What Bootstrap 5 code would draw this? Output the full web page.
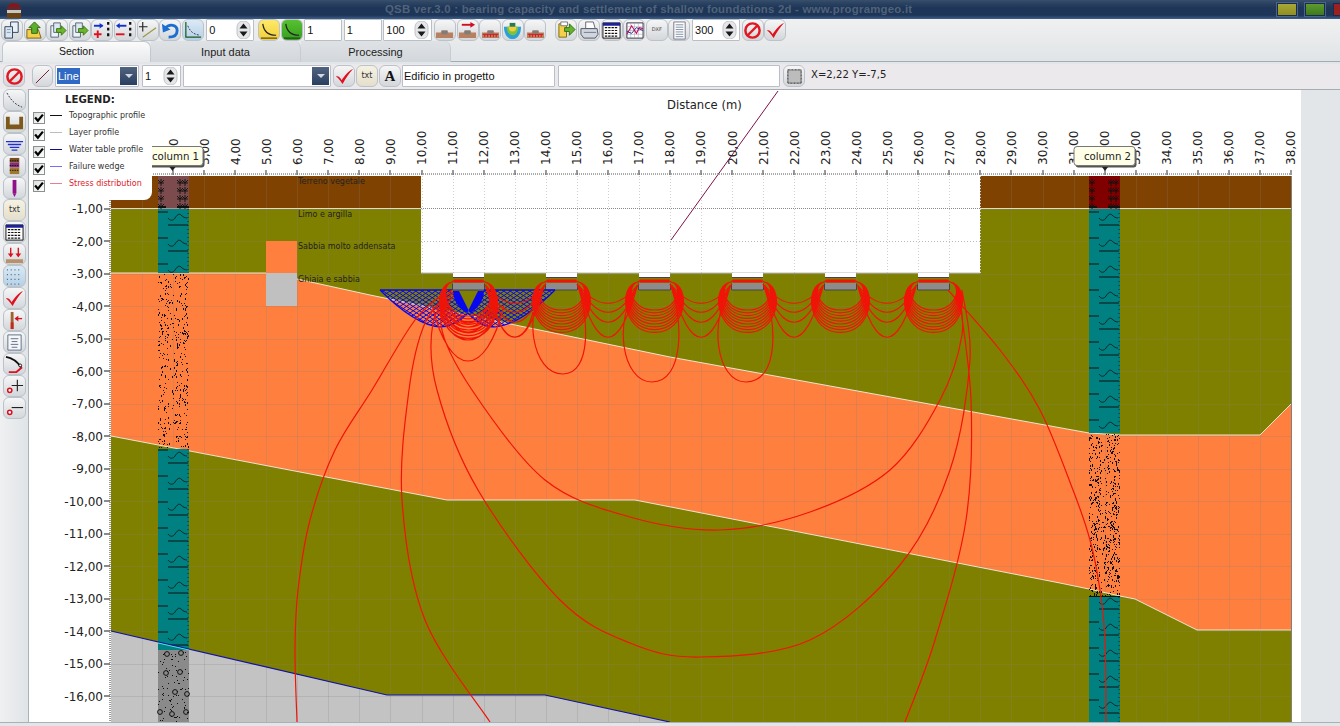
<!DOCTYPE html>
<html lang="en">
<head>
<meta charset="utf-8">
<title>QSB ver.3.0</title>
<link href="https://cdn.jsdelivr.net/npm/bootstrap@5.3.0/dist/css/bootstrap.min.css" rel="stylesheet">
<style>
html,body{margin:0;height:726px;overflow:hidden;background:#e3e6e9}
body{font-family:"Liberation Sans",Arial,sans-serif;font-size:10.8px;color:#222}
.app-shell{width:1340px;height:726px}
.title-strip{height:20px;background:linear-gradient(#3b4f69 0,#2f4766 10%,#1f3658 40%,#1d3557 80%,#3f5f8a 100%);color:#4f6379;font-weight:700;font-size:11.4px;letter-spacing:.02em;position:relative}
.title-logo{position:absolute;left:5px;top:1px;width:18px;height:18px}
.win-ctrl{width:20px;height:13px;border:1px solid #1b2c4a;outline:1px solid #4a648a;display:block}
.win-min{background:linear-gradient(#a8a838,#8f8f20)}
.win-max{background:linear-gradient(#5f9a30,#3d7a1c)}
.win-close{background:#9b2020;width:7px;border-right:0;outline:0}
.win-row{position:absolute;left:1277px;top:3px;gap:8px}
.tool-zone{background:linear-gradient(#f0f0f0,#e0e4e7)}
.tool-strip{height:22px;padding-left:1px;gap:.6px}
.tool-btn{width:22px;height:22px;flex:0 0 22px;border:1px solid #bcc2c9;border-radius:6px;background:linear-gradient(#f6f6f6,#d3d7db);padding:0;display:flex;align-items:center;justify-content:center}
.tool-btn svg{width:19px;height:19px;display:block}
.tool-btn.is-on{background:linear-gradient(#dbe9f5,#b6d0e6)}
.tool-btn.is-yellow{background:linear-gradient(#ffe96a,#f2cf3a)}
.tool-btn.is-green{background:linear-gradient(#58c030,#35a020)}
.sep-gap{flex:0 0 8px}
.field{height:22px;background:#fff;border:1px solid #b9bfc6;border-radius:1px;display:flex;align-items:center;padding:0 2px;font-size:11px;color:#111;white-space:nowrap;overflow:hidden}
.spin-ico{width:15px;height:18px;margin-left:auto;flex:none}
.tabs-row{height:21px;border-bottom:1px solid #a3aab8;padding-left:2px;flex-wrap:nowrap}
.tabs-row .nav-link{width:150px;height:21px;padding:3px 0 0;text-align:center;font-size:11px;color:#222;background:linear-gradient(#dfe2e5,#d2d7db);border:0;border-right:1px solid #c6ccd2;border-radius:0 7px 0 0;margin:0}
.tabs-row .nav-link.active{width:149px;background:linear-gradient(#fbfbfb,#e7e9eb);border:1px solid #c3c8ce;border-bottom:0;border-radius:6px 7px 0 0;color:#111;height:21px;padding-top:2px;font-size:10.5px}
.opt-strip{height:27px;margin-top:2px;background:#ece9ed;border-bottom:1px solid #a6acb2;padding:0 0 1px 3px;gap:2px}
.combo-arrow{width:17px;height:18px;margin-left:auto;margin-right:-1px;background:linear-gradient(#51637e,#2a3f60);flex:none;display:flex;align-items:center;justify-content:center}
.combo-arrow::after{content:"";border-left:4px solid transparent;border-right:4px solid transparent;border-top:4px solid #cfd8e4}
.pick-text{background:#316ac5;color:#fff;padding:0 1px;margin-left:-1px}
.coord-text{font-family:"DejaVu Sans",sans-serif;font-size:10.1px;color:#222;margin:-4px 0 0 4px;white-space:nowrap}
.main-zone{height:632px}
.side-tools{width:29px;flex:0 0 29px;border-right:1px solid #a9b1b9;padding:0 0 0 3px;margin-top:-1px;background:linear-gradient(90deg,#eef0f1,#e1e4e7)}
.side-tools .tool-btn{flex:0 0 22px;width:23px}
.plot-wrap{width:1272px;flex:0 0 1272px;height:632px;background:#fff;position:relative;overflow:hidden}
.plot-wrap svg.plot{display:block;width:1272px;height:632px}
.legend-box{position:absolute;left:0;top:0;width:123px;height:110px;background:#fff;border-bottom-right-radius:8px;padding-top:3px}
.legend-title{font-family:"DejaVu Sans",sans-serif;font-weight:700;font-size:10.2px;margin-left:36px;line-height:13px;margin-bottom:3px;color:#222}
.legend-row{height:17px;margin-left:4px;font-family:"DejaVu Sans",sans-serif;font-size:8px;color:#333;white-space:nowrap}
.legend-label{position:relative;top:-2px}
.legend-check{width:12px;height:12px;border:1px solid #8a8f94;background:linear-gradient(135deg,#ddd,#fff);display:flex;flex:none}
.legend-check svg{width:10px;height:10px}
.legend-swatch{width:12px;height:1px;margin:-4px 7px 0 5px;flex:none}
.stress-label{color:#e0202a}
.bottom-edge{height:4px;border-top:1px solid #aab0b8;background:#e3e6e9}
</style>
</head>
<body>
<svg width="0" height="0" class="d-none">
<defs>
<symbol id="s-docs" viewBox="0 0 20 20"><path d="M8 1h8v11H8z" fill="#e8f0f8" stroke="#345"/><path d="M2 6h8v12H2z" fill="#d8e6f4" stroke="#345"/><path d="M4 9h4M4 12h4" stroke="#89a"/></symbol>
<symbol id="s-open" viewBox="0 0 20 20"><path d="M2 9h12l3 9H2z" fill="#f3cf4a" stroke="#7a6210"/><path d="M10 1l6 6h-3v6H7V7H4z" fill="#5fae2e" stroke="#2c6a10"/></symbol>
<symbol id="s-save" viewBox="0 0 20 20"><path d="M3 5h8v12H3z" fill="#eef2f8" stroke="#567"/><path d="M6 2h7v10H6z" fill="#dfe8f2" stroke="#567"/><path d="M9 8h5V5l5 5-5 5v-3H9z" fill="#6cb52e" stroke="#3a7a10"/></symbol>
<symbol id="s-addcol" viewBox="0 0 20 20"><path d="M1 5h9" stroke="#1030d0" stroke-width="2"/><path d="M7 2l4 3-4 3z" fill="#1030d0"/><path d="M1 14h8M5 10v8" stroke="#e01020" stroke-width="2"/><path d="M16 1v18" stroke="#111" stroke-width="2.4" stroke-dasharray="3 3"/></symbol>
<symbol id="s-delcol" viewBox="0 0 20 20"><path d="M3 5h9" stroke="#1030d0" stroke-width="2"/><path d="M5 2L1 5l4 3z" fill="#1030d0"/><path d="M1 14h9" stroke="#e01020" stroke-width="2"/><path d="M16 1v18" stroke="#111" stroke-width="2.4" stroke-dasharray="3 3"/></symbol>
<symbol id="s-plusline" viewBox="0 0 20 20"><path d="M1 6h9M5 1v10" stroke="#222" stroke-width="1.2"/><path d="M5 17L19 7" stroke="#9a9a40" stroke-width="1.3"/></symbol>
<symbol id="s-undo" viewBox="0 0 20 20"><path d="M4 8c5-6 13-4 13 2s-5 7-9 7" fill="none" stroke="#1c6fd0" stroke-width="3"/><path d="M1 3l1 9 8-3z" fill="#1c6fd0"/></symbol>
<symbol id="s-axis" viewBox="0 0 20 20"><path d="M3 1v16h16" fill="none" stroke="#185a20" stroke-width="1.3"/><path d="M5 5c2 5 5 9 13 10" fill="none" stroke="#335" stroke-dasharray="2 1.5"/></symbol>
<symbol id="s-curve" viewBox="0 0 20 20"><path d="M4 3c1 8 5 12 14 12" fill="none" stroke="#222" stroke-width="1.3"/><path d="M2 18h17" stroke="#222"/></symbol>
<symbol id="s-ter" viewBox="0 0 20 20"><path d="M1 12h5l1-2h6l1 2h5v6H1z" fill="#b8805e"/><path d="M7 10h6v4H7z" fill="#7d7d7d"/></symbol>
<symbol id="s-terarrow" viewBox="0 0 20 20"><path d="M1 12h5l1-2h6l1 2h5v6H1z" fill="#b8805e"/><path d="M7 10h6v4H7z" fill="#7d7d7d"/><path d="M4 4h11" stroke="#d01020" stroke-width="2"/><path d="M13 1l5 3-5 3z" fill="#d01020"/></symbol>
<symbol id="s-terred" viewBox="0 0 20 20"><path d="M1 12h5l1-2h6l1 2h5v6H1z" fill="#b8805e"/><path d="M7 10h6v3H7z" fill="#7d7d7d"/><path d="M2 14h16M4 14v3M7 14v3M10 14v3M13 14v3M16 14v3" stroke="#d81020"/></symbol>
<symbol id="s-bowl" viewBox="0 0 20 20"><path d="M1 6h18c0 8-4 13-9 13S1 14 1 6z" fill="#28a0d8"/><path d="M4 6h12c0 5-2 9-6 9s-6-4-6-9z" fill="#7cc23a"/><path d="M6 6h8c0 3-1 5-4 5s-4-2-4-5z" fill="#f2cf3a"/><path d="M7 2h6v4H7z" fill="#2a7a50"/></symbol>
<symbol id="s-export" viewBox="0 0 20 20"><path d="M2 3h8v14H2z" fill="#f3cf4a" stroke="#806a10"/><path d="M4 1h7v4H4z" fill="#fff" stroke="#777"/><path d="M8 7h5V3l6 6-6 6v-4H8z" fill="#66b32c" stroke="#2f7010"/></symbol>
<symbol id="s-print" viewBox="0 0 20 20"><path d="M6 1h8l2 7H6z" fill="#fff" stroke="#667"/><path d="M1 8h17l1 6-3 4H4l-3-4z" fill="#cfd6de" stroke="#556"/><path d="M4 12h13" stroke="#778"/></symbol>
<symbol id="s-table" viewBox="0 0 20 20"><path d="M1 2h18v16H1z" fill="#fff" stroke="#111"/><path d="M1 2h18v3H1z" fill="#1a20a0"/><path d="M3 7h14M3 10h14M3 13h14M3 16h14" stroke="#111" stroke-dasharray="2.5 1" stroke-width="1.3"/></symbol>
<symbol id="s-graph" viewBox="0 0 20 20"><path d="M2 2h17v16H2z" fill="#fff" stroke="#334"/><path d="M2 6h17M2 10h17M2 14h17M6 2v16M10 2v16M14 2v16" stroke="#99a" stroke-width=".5"/><path d="M2 14l5-9 5 8 3-6 4 1" fill="none" stroke="#d01060" stroke-width="1.2"/><path d="M2 11l5 2 5-6 7 3" fill="none" stroke="#203090"/></symbol>
<symbol id="s-note" viewBox="0 0 20 20"><path d="M4 1h12v18H4z" fill="#fdfdfd" stroke="#778"/><path d="M6 4h8M6 6.500h8M6 9h8M6 11.500h8M6 14h8M6 16.500h8" stroke="#7d8ea8"/></symbol>
<symbol id="s-ban" viewBox="0 0 20 20"><circle cx="10" cy="10" r="7.500" fill="none" stroke="#e01824" stroke-width="2.600"/><path d="M5 15L15 5" stroke="#e01824" stroke-width="2.600"/></symbol>
<symbol id="s-check" viewBox="0 0 20 20"><path d="M1 10c2-1 4 0 6 4 3-5 7-10 12-12-4 4-8 10-11 16-2-3-4-6-7-8z" fill="#e0101c"/></symbol>
<symbol id="s-line" viewBox="0 0 20 20"><path d="M3 17L17 3" stroke="#7a1030" stroke-width="1"/></symbol>
<symbol id="s-square" viewBox="0 0 20 20"><path d="M3 3h14v14H3z" fill="#bcbcbc" stroke="#111" stroke-dasharray="1 .5"/></symbol>
<symbol id="s-slope" viewBox="0 0 20 20"><path d="M2 2c4 7 8 12 16 15" fill="none" stroke="#334" stroke-dasharray="2 1.500"/></symbol>
<symbol id="s-found" viewBox="0 0 20 20"><path d="M1 4h4v8h10V4h4v13H1z" fill="#7d5a1a"/></symbol>
<symbol id="s-water" viewBox="0 0 20 20"><path d="M1 7h18M3 10h14M5 13h10M7 16h6" stroke="#2030d0" stroke-width="1.400"/></symbol>
<symbol id="s-strat" viewBox="0 0 20 20"><path d="M5 1h10v5H5z" fill="#7a4a20"/><path d="M5 6h10v5H5z" fill="#8a2a80"/><path d="M5 11h10v7H5z" fill="#a07830"/><path d="M5 4h10M5 9h10M5 14h10" stroke="#111" stroke-dasharray="1.500 1"/></symbol>
<symbol id="s-bar" viewBox="0 0 20 20"><path d="M8 1h4v14H8z" fill="#90108a"/><path d="M8 15h4l-2 4z" fill="#90108a"/></symbol>
<symbol id="s-loads" viewBox="0 0 20 20"><path d="M1 15h18v4H1z" fill="#b8906a"/><path d="M6 3v9M14 3v9" stroke="#d81020" stroke-width="1.400"/><path d="M3 9l3 4 3-4zM11 9l3 4 3-4z" fill="#d81020"/></symbol>
<symbol id="s-dots" viewBox="0 0 20 20"><path d="M2 3h16M2 8h16M2 13h16M2 18h16" stroke="#467" stroke-dasharray="1 3" stroke-width="1.200"/></symbol>
<symbol id="s-pile" viewBox="0 0 20 20"><path d="M6 1h3v18H6z" fill="#a06030"/><path d="M6 12h3v7H6z" fill="#c8281c"/><path d="M11 8h7" stroke="#d81020" stroke-width="1.400"/><path d="M14 5l-4 3 4 3z" fill="#d81020"/></symbol>
<symbol id="s-lines" viewBox="0 0 20 20"><path d="M3 2h14v16H3z" fill="#f4f6f8" stroke="#607088"/><path d="M6 6h8M7 9h6M6 12h8M7 15h6" stroke="#607088"/></symbol>
<symbol id="s-wedge" viewBox="0 0 20 20"><path d="M1 2c6 1 12 5 16 11" fill="none" stroke="#111" stroke-width="2"/><path d="M4 18h8l6-5" fill="none" stroke="#e01020" stroke-width="2"/><circle cx="16" cy="11" r="1.500" fill="#fff" stroke="#111"/></symbol>
<symbol id="s-ptadd" viewBox="0 0 20 20"><circle cx="5" cy="14" r="2.200" fill="#fff" stroke="#d81020" stroke-width="1.600"/><path d="M7 9h12M13 3v12" stroke="#222" stroke-width="1.200"/></symbol>
<symbol id="s-ptdel" viewBox="0 0 20 20"><circle cx="5" cy="14" r="2.200" fill="#fff" stroke="#d81020" stroke-width="1.600"/><path d="M7 9h12" stroke="#222" stroke-width="1.200"/></symbol>
<symbol id="s-spin" viewBox="0 0 15 18"><rect x="1" y="0" width="13" height="18" rx="6" fill="#e4e6e8" stroke="#c0c4c8"/><path d="M3.500 7.500L7.500 2.500l4 5zM3.500 10.500l4 5 4-5z" fill="#1a1a1a"/></symbol>
</defs>
</svg>

<div class="app-shell d-flex flex-column">
  <div class="title-strip d-flex align-items-center">
    <svg class="title-logo" viewBox="0 0 18 18"><path d="M3 6c0-5 12-5 12 0z" fill="#8a1418"/><path d="M2 6h14v3H2z" fill="#5a2a30"/><path d="M2 9h14v3H2z" fill="#c8c8c0"/><path d="M2 12h14v5H2z" fill="#6a4414"/></svg>
    <span style="margin-left:385px">QSB ver.3.0 : bearing capacity and settlement of shallow foundations 2d - www.programgeo.it</span>
    <div class="win-row d-flex"><span class="win-ctrl win-min"></span><span class="win-ctrl win-max"></span><span class="win-ctrl win-close"></span></div>
  </div>
  <div class="tool-zone">
    <div class="tool-strip d-flex align-items-center">
      <span class="tool-btn"><svg><use href="#s-docs"/></svg></span>
      <span class="tool-btn"><svg><use href="#s-open"/></svg></span>
      <span class="tool-btn"><svg><use href="#s-save"/></svg></span>
      <span class="tool-btn"><svg><use href="#s-save"/></svg></span>
      <span class="tool-btn"><svg><use href="#s-addcol"/></svg></span>
      <span class="tool-btn"><svg><use href="#s-delcol"/></svg></span>
      <span class="tool-btn"><svg><use href="#s-plusline"/></svg></span>
      <span class="tool-btn"><svg><use href="#s-undo"/></svg></span>
      <span class="tool-btn is-on"><svg><use href="#s-axis"/></svg></span>
      <span class="field" style="width:48px;flex:none;margin-left:2px">0<svg class="spin-ico"><use href="#s-spin"/></svg></span>
      <span class="tool-btn is-yellow" style="margin-left:3px"><svg><use href="#s-curve"/></svg></span>
      <span class="tool-btn is-green"><svg><use href="#s-curve"/></svg></span>
      <span class="field" style="width:38px;flex:none;margin-left:1px">1</span>
      <span class="field" style="width:38px;flex:none;margin-left:1px">1</span>
      <span class="field" style="width:49px;flex:none;margin-left:1px">100<svg class="spin-ico"><use href="#s-spin"/></svg></span>
      <span class="tool-btn" style="margin-left:1px"><svg><use href="#s-ter"/></svg></span>
      <span class="tool-btn"><svg><use href="#s-terarrow"/></svg></span>
      <span class="tool-btn"><svg><use href="#s-terred"/></svg></span>
      <span class="tool-btn"><svg><use href="#s-bowl"/></svg></span>
      <span class="tool-btn"><svg><use href="#s-terred"/></svg></span>
      <span class="sep-gap"></span>
      <span class="tool-btn"><svg><use href="#s-export"/></svg></span>
      <span class="tool-btn"><svg><use href="#s-print"/></svg></span>
      <span class="tool-btn"><svg><use href="#s-table"/></svg></span>
      <span class="tool-btn"><svg><use href="#s-graph"/></svg></span>
      <span class="tool-btn" style="font-size:5px;font-family:'DejaVu Sans',sans-serif;color:#444">DXF</span>
      <span class="tool-btn"><svg><use href="#s-note"/></svg></span>
      <span class="field" style="width:48px;flex:none;margin-left:1px">300<svg class="spin-ico"><use href="#s-spin"/></svg></span>
      <span class="tool-btn" style="margin-left:1px"><svg><use href="#s-ban"/></svg></span>
      <span class="tool-btn"><svg><use href="#s-check"/></svg></span>
    </div>
    <ul class="nav nav-tabs tabs-row">
      <li class="nav-item"><a class="nav-link active" href="#">Section</a></li>
      <li class="nav-item"><a class="nav-link" href="#">Input data</a></li>
      <li class="nav-item"><a class="nav-link" href="#">Processing</a></li>
    </ul>
  </div>
  <div class="opt-strip d-flex align-items-center">
    <span class="tool-btn"><svg><use href="#s-ban"/></svg></span>
    <span class="tool-btn" style="margin-left:5px;flex-basis:21px;width:21px"><svg><use href="#s-line"/></svg></span>
    <span class="field" style="width:84px;flex:none;margin-left:0">
      <span class="pick-text">Line</span><span class="combo-arrow"></span></span>
    <span class="field" style="width:39px;flex:none;margin-left:1px">1<svg class="spin-ico"><use href="#s-spin"/></svg></span>
    <span class="field" style="width:148px;flex:none;margin-left:0"><span class="combo-arrow"></span></span>
    <span class="tool-btn" style="margin-left:0"><svg><use href="#s-check"/></svg></span>
    <span class="tool-btn" style="margin-left:-1px;font-size:8px;font-family:'DejaVu Sans',sans-serif;color:#333;background:linear-gradient(#f6f2e2,#e4dfcb)">txt</span>
    <span class="tool-btn" style="margin-left:-1px;font-family:'Liberation Serif',serif;font-weight:700;font-size:15px;color:#111">A</span>
    <span class="field" style="width:153px;flex:none;margin-left:-1px;padding-left:1px">Edificio in progetto</span>
    <span class="field" style="width:222px;flex:none;margin-left:1px"></span>
    <span class="tool-btn" style="margin-left:1px"><svg><use href="#s-square"/></svg></span>
    <span class="coord-text">X=2,22 Y=-7,5</span>
  </div>
  <div class="main-zone d-flex">
    <div class="side-tools d-flex flex-column">
      <span class="tool-btn"><svg><use href="#s-slope"/></svg></span>
      <span class="tool-btn"><svg><use href="#s-found"/></svg></span>
      <span class="tool-btn"><svg><use href="#s-water"/></svg></span>
      <span class="tool-btn"><svg><use href="#s-strat"/></svg></span>
      <span class="tool-btn"><svg><use href="#s-bar"/></svg></span>
      <span class="tool-btn" style="font-size:8px;font-family:'DejaVu Sans',sans-serif;color:#333;background:linear-gradient(#f6f2e2,#e4dfcb)">txt</span>
      <span class="tool-btn"><svg><use href="#s-table"/></svg></span>
      <span class="tool-btn"><svg><use href="#s-loads"/></svg></span>
      <span class="tool-btn is-on"><svg><use href="#s-dots"/></svg></span>
      <span class="tool-btn"><svg><use href="#s-check"/></svg></span>
      <span class="tool-btn"><svg><use href="#s-pile"/></svg></span>
      <span class="tool-btn"><svg><use href="#s-lines"/></svg></span>
      <span class="tool-btn"><svg><use href="#s-wedge"/></svg></span>
      <span class="tool-btn"><svg><use href="#s-ptadd"/></svg></span>
      <span class="tool-btn"><svg><use href="#s-ptdel"/></svg></span>
    </div>
    <div class="plot-wrap">
      <svg class="plot" id="plot" viewBox="29 90 1272 632" xmlns="http://www.w3.org/2000/svg"></svg>
      <div class="legend-box">
        <div class="legend-title">LEGEND:</div>
        <div class="legend-row d-flex align-items-center"><span class="legend-check"><svg viewBox="0 0 9 9"><path d="M1 4l2.500 3L8 1.500" fill="none" stroke="#000" stroke-width="2"/></svg></span><span class="legend-swatch" style="background:#111"></span><span class="legend-label">Topographic profile</span></div>
        <div class="legend-row d-flex align-items-center"><span class="legend-check"><svg viewBox="0 0 9 9"><path d="M1 4l2.500 3L8 1.500" fill="none" stroke="#000" stroke-width="2"/></svg></span><span class="legend-swatch" style="background:#bbb"></span><span class="legend-label">Layer profile</span></div>
        <div class="legend-row d-flex align-items-center"><span class="legend-check"><svg viewBox="0 0 9 9"><path d="M1 4l2.500 3L8 1.500" fill="none" stroke="#000" stroke-width="2"/></svg></span><span class="legend-swatch" style="background:#101080"></span><span class="legend-label">Water table profile</span></div>
        <div class="legend-row d-flex align-items-center"><span class="legend-check"><svg viewBox="0 0 9 9"><path d="M1 4l2.500 3L8 1.500" fill="none" stroke="#000" stroke-width="2"/></svg></span><span class="legend-swatch" style="background:#7070f0"></span><span class="legend-label">Failure wedge</span></div>
        <div class="legend-row d-flex align-items-center stress-label"><span class="legend-check"><svg viewBox="0 0 9 9"><path d="M1 4l2.500 3L8 1.500" fill="none" stroke="#000" stroke-width="2"/></svg></span><span class="legend-swatch" style="background:#e88090"></span><span class="legend-label">Stress distribution</span></div>
      </div>
    </div>
  </div>
  <div class="bottom-edge"></div>
</div>
<script>
(function(){
var X=function(d){return 111+31.05*d},Y=function(d){return 176+32.5*d};
var o=[],seed=12345;
function rnd(){seed=(seed*16807)%2147483647;return seed/2147483647}
function add(s){o.push(s)}
function poly(p,fill,extra){add('<polygon points="'+p+'" fill="'+fill+'" '+(extra||'')+'/>')}
function line(p,st,w,extra){add('<polyline points="'+p+'" fill="none" stroke="'+st+'" stroke-width="'+(w||1)+'" '+(extra||'')+'/>')}
var top2="111,273 266,273 297,279 370,295 670,357 1089,433 1120,435 1260,435 1291,404";
var low2="111,436 447,500 635,500 1060,583 1089,589 1120,596 1135,599 1197,630 1291,630";
var rock="111,631 387,695 545,695 670,722";
var defs='<defs><clipPath id="cw1"><path d="M380,290L452,290L468,313Q455,327 440,327Q415,325 380,290Z"/></clipPath><clipPath id="cw2"><path d="M555,290L483,290L467,313Q480,327 495,327Q520,325 555,290Z"/></clipPath><clipPath id="ch"><rect x="29" y="90" width="1272" height="632"/></clipPath></defs>';
// soil bodies
add('<rect x="111" y="176" width="1180" height="32.500" fill="#7f4200"/>');
add('<rect x="111" y="208" width="1180" height="514" fill="#808000"/>');
poly(top2+" "+low2.split(" ").reverse().join(" "),"#ff7f3f");
poly(rock+" 111,722","#c3c3c3");
// grid
for(var i=1;i<38;i++){add('<path d="M'+(Math.round(X(i))+.5)+',176V722" stroke="#808080" stroke-opacity=".22"/>')}
for(i=1;i<17;i++){add('<path d="M111,'+(Math.round(Y(i))+.5)+'H1291" stroke="#808080" stroke-opacity=".22"/>')}
line("111,208.500 1291,208.500","#dcdcc8");line(top2,"#e8e6d0");line(low2,"#e8e6d0");
// layer swatches
add('<rect x="266" y="241" width="31" height="32" fill="#ff7f3f"/><rect x="266" y="273" width="31" height="33" fill="#c0c0c0"/>');
var tl=[["Terreno vegetale",184],["Limo e argilla",217],["Sabbia molto addensata",249],["Ghiaia e sabbia",282]];
tl.forEach(function(t){add('<text x="298" y="'+t[1]+'" font-family="DejaVu Sans" font-size="8" fill="#222">'+t[0]+'</text>')});
// columns
function marks(x0,y0,y1){var p='';for(var y=y0;y<y1;y+=8){[x0+3,x0+22,x0+27].forEach(function(x){p+='M'+(x-3)+','+(y+3)+'H'+(x+3)+'M'+x+','+(y-1)+'V'+(y+6)+'M'+(x-3)+','+y+'L'+x+','+(y+3)+'L'+(x+3)+','+y});}add('<path d="'+p+'" stroke="#111" fill="none" stroke-width=".9"/>')}
function teal(x0,y0,y1,w0){add('<rect x="'+x0+'" y="'+y0+'" width="31" height="'+(y1-y0)+'" fill="#008080"/>');var p='',q='';for(var y=w0;y<y1+26;y+=26){if(y-6>y0&&y-6<y1)p+='M'+x0+','+(y-6)+'h10';if(y>y0+2&&y<y1){q+='M'+(x0+10)+','+y+'c2,3 5,3 7,0s4,-5 6,-3 4,3 6,3'}if(y+7>y0&&y+7<y1)p+='M'+(x0+10)+','+(y+7)+'h20';}add('<path d="'+p+'" stroke="#111"/><path d="'+q+'" stroke="#111" fill="none" stroke-width=".8"/>');var d='';for(var yy=y0;yy<y1;yy+=4){d+='M'+(x0+30)+','+yy+'v1'}add('<path d="'+d+'" stroke="#222"/>')}
function stip(x0,y0,y1,n){var p='';for(var k=0;k<n;k++){var x=Math.floor(x0+rnd()*31),y=Math.floor(y0+rnd()*(y1-y0));var wob=Math.sin((y-y0)/22)*2;var mid=x0+13+wob;if(Math.abs(x-mid)<2.5&&rnd()<.7)continue;p+='M'+(x+.5)+','+y+'v'+(rnd()<.3?2:1)}add('<path d="'+p+'" stroke="#111"/>')}
add('<rect x="158" y="176" width="31" height="32.500" fill="#7c4b4e"/>');marks(158,180,205);add('<path d="M158,207h8M177,207h12" stroke="#111" stroke-width="2"/>');
teal(158,209,273,218);stip(158,274,449,470);teal(158,449,650,456);
add('<rect x="158" y="650" width="31" height="72" fill="#8a8a8a"/>');
var gp='';for(i=0;i<90;i++){gp+='M'+Math.floor(158+rnd()*31)+'.5,'+Math.floor(652+rnd()*70)+'v1'}add('<path d="'+gp+'" stroke="#111"/>');
[[167,654],[181,653],[166,673],[180,672],[175,692],[187,694],[160,712],[172,714],[186,712]].forEach(function(c){add('<circle cx="'+c[0]+'" cy="'+c[1]+'" r="2.400" fill="none" stroke="#111"/>')});
add('<rect x="1089" y="176" width="31" height="32.500" fill="#800000"/>');marks(1089,180,205);add('<path d="M1089,207h8M1108,207h12" stroke="#111" stroke-width="2"/>');
teal(1089,209,433,218);stip(1089,434,597,760);add('<path d="M1089,596.500h31" stroke="#111"/>');teal(1089,597,722,602);
// blue table line
line(rock,"#1010a8",1.2);
add('<path d="M158,643L189,650" stroke="#50e0e0"/>');
// building
add('<rect x="421" y="176" width="559" height="97" fill="#fff"/>');
for(i=10;i<=28;i++){add('<path d="M'+(Math.round(X(i))+.5)+',176V273" stroke="#d0d0d0" stroke-dasharray="1 2"/>')}
add('<path d="M421,208.500H980" stroke="#888" stroke-dasharray="1 1"/><path d="M421,241.500H980" stroke="#bbb" stroke-dasharray="1 2"/><path d="M421,273H980" stroke="#bbb"/>');
// footings
var fc=[468.500,561.500,654.500,747.500,840.500,933.500];
fc.forEach(function(c){add('<rect x="'+(c-15.500)+'" y="273" width="31" height="5" fill="#fff"/><path d="M'+(c-15.500)+',277.500h31" stroke="#444"/><rect x="'+(c-15.500)+'" y="283" width="31" height="7" fill="#8c8c8c"/><path d="M'+(c-16)+',283.500v6.500M'+(c+16)+',283.500v6.500M'+(c-15.500)+',290h31" stroke="#444"/>')});
// wedge lattice
function lattice(x0,x1,id){var m='';for(var a=x0-70;a<x1+20;a+=6.500){m+='M'+a+',290q30,20 62,40M'+a+',332q30,-20 62,-42'}add('<g clip-path="url(#'+id+')"><path d="'+m+'" stroke="#0808e8" fill="none"/></g>')}
lattice(380,468,'cw1');lattice(468,555,'cw2');
add('<path d="M380,290H452M555,290H483" stroke="#0808e8" stroke-width="1.500"/>');
add('<path d="M380,290Q415,325 440,327Q455,327 468,313Q480,327 495,327Q520,325 555,290" fill="none" stroke="#0808e8" stroke-width="1.200"/>');
// stress curves
var R='';
fc.forEach(function(c,n){for(var k=0;k<9;k++){var w=(19+k*.8)*1.3,bt=(n==0?316:310)+k*2.8;R+='M'+(c-16)+',282C'+(c-w-4)+',284 '+(c-w)+','+bt+' '+c+','+bt+'C'+(c+w)+','+bt+' '+(c+w+4)+',284 '+(c+16)+',282'}
 R+='M'+(c-16)+',281H'+(c+16)+'M'+(c-15)+',280H'+(c+15)+'M'+(c-15)+',282H'+(c+15);
 if(n<5){[303,312,322,337].forEach(function(dip){var cy=284+(dip-284)/.75;R+='M'+(c+17)+',285C'+(c+36)+','+cy+' '+(c+57)+','+cy+' '+(c+76)+',285'})}
});
[[323],[327],[332],[340],[361]].forEach(function(a,idx){var d=a[0],cy=305+(d-305)/.75,hw=20+idx*4;R+='M'+(468-hw)+',305C'+(468-hw/2)+','+cy+' '+(468+hw/2)+','+cy+' '+(468+hw)+',305'});
R+='M497,315C505,345 525,345 533,312';
R+='M546,284C523,310 531,374 563,374C592,374 589,315 577,284';
R+='M639,284C612,320 622,382 652,382C684,382 684,320 670,284';
R+='M732,284C708,320 716,382 746,382C780,382 777,320 763,284';
function smooth(pts){var s='M'+pts[0][0]+','+pts[0][1];for(var i=0;i<pts.length-1;i++){var p0=pts[i-1]||pts[i],p1=pts[i],p2=pts[i+1],p3=pts[i+2]||p2;s+='C'+(p1[0]+(p2[0]-p0[0])/6)+','+(p1[1]+(p2[1]-p0[1])/6)+' '+(p2[0]-(p3[0]-p1[0])/6)+','+(p2[1]-(p3[1]-p1[1])/6)+' '+p2[0]+','+p2[1]}return s}
R+=smooth([[448,290],[415,320],[372,390],[335,450],[310,520],[298,590],[295,650],[297,722]]);
R+=smooth([[452,290],[425,323],[409,390],[402,500],[425,620],[490,722]]);
R+=smooth([[455,290],[433,323],[437,390],[478,490],[560,600],[630,643],[700,657],[810,640],[900,565],[950,470],[970,360],[962,290]]);
R+=smooth([[458,290],[441,325],[472,390],[545,480],[630,517],[720,530],[810,512],[890,470],[940,400],[962,335],[958,290]]);
R+=smooth([[948,290],[1000,350],[1040,410],[1073,490],[1090,540],[1100,590],[1105,640],[1106,722]]);
R+=smooth([[958,290],[971,400],[966,520],[935,640],[905,722]]);
add('<path d="'+R+'" fill="none" stroke="#f01408" stroke-width="1.200"/>');
// central wedge core, above the stress lines
add('<path d="M453,290.500H484L468.500,313Z" fill="#808000"/><path d="M453,291L459,291L469,311L466,313Q453,304 453,291ZM484,291L478,291L468,311L471,313Q484,304 484,291Z" fill="#0808ee"/><rect x="453" y="283" width="31" height="7" fill="#8c8c8c"/><path d="M453,290h31" stroke="#444"/>');
// purple line
add('<path d="M778,91L671,240" stroke="#80104a" stroke-width="1"/>');
// frame + rulers
add('<path d="M1291.500,176V722" stroke="#808080"/>');
add('<path d="M110,176V722" stroke="#999" stroke-width="2" stroke-dasharray="1 1"/><path d="M111,174H1291" stroke="#aaa" stroke-width="2" stroke-dasharray="1 1"/>');
var tk='';for(i=0;i<=38;i++)tk+='M'+Math.round(X(i))+',170v5';for(i=1;i<=16;i++)tk+='M104,'+Math.round(Y(i))+'h6';
add('<path d="'+tk+'" stroke="#666" stroke-width="1.300"/>');
var fn='font-family="DejaVu Sans" font-size="12" fill="#222"';
for(i=1;i<=38;i++){var xx=X(i)+4.500;add('<text transform="translate('+xx+',165) rotate(-90)" '+fn+'>'+i+',00</text>')}
for(i=1;i<=16;i++){add('<text x="103" y="'+(Y(i)+4.500)+'" text-anchor="end" '+fn+'>-'+i+',00</text>')}
add('<text x="667" y="109" font-family="DejaVu Sans" font-size="11.600" fill="#222">Distance (m)</text>');
// tooltips
function tip(x,w,c,lbl){add('<rect x="'+(x+1.500)+'" y="148.500" width="'+w+'" height="19" rx="3" fill="#555"/><rect x="'+x+'" y="146.500" width="'+w+'" height="19" rx="3" fill="#ffffe8" stroke="#777"/><text x="'+(x+w/2+3)+'" y="160" text-anchor="middle" font-family="DejaVu Sans" font-size="10.200" fill="#222">'+lbl+'</text><path d="M'+(c-3)+',167h6l-3,4z" fill="#222"/>')}
tip(142,61,172.500,'column 1');tip(1074,61,1105,'column 2');
document.getElementById('plot').innerHTML=defs+'<g clip-path="url(#ch)">'+o.join('')+'</g>';
})();
</script>
<script src="https://cdn.jsdelivr.net/npm/bootstrap@5.3.0/dist/js/bootstrap.bundle.min.js"></script>
</body>
</html>
